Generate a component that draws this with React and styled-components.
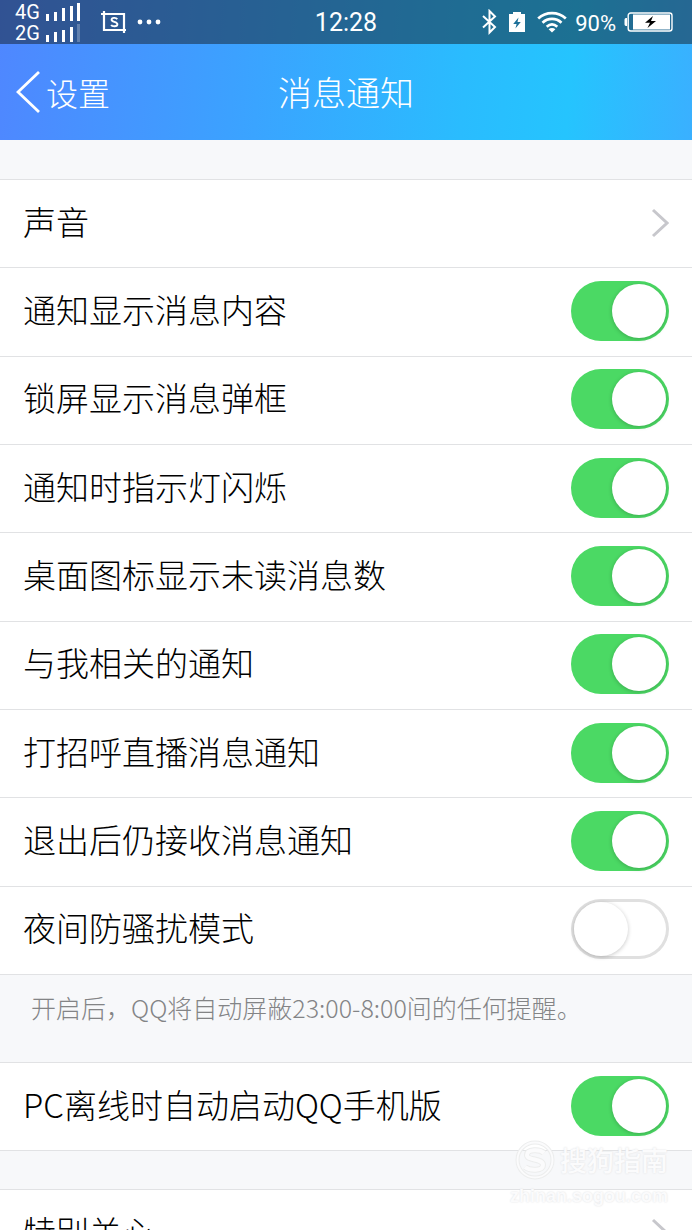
import React, { useState } from "react"
import styled, { createGlobalStyle } from "styled-components"

const alerts = [
  { id: "content", label: "通知显示消息内容", on: true },
  { id: "lock", label: "锁屏显示消息弹框", on: true },
  { id: "led", label: "通知时指示灯闪烁", on: true },
  { id: "badge", label: "桌面图标显示未读消息数", on: true },
  { id: "related", label: "与我相关的通知", on: true },
  { id: "live", label: "打招呼直播消息通知", on: true },
  { id: "exit", label: "退出后仍接收消息通知", on: true },
  { id: "night", label: "夜间防骚扰模式", on: false },
]

const Chevron = () => (
  <svg width="18" height="30" viewBox="0 0 18 30" fill="none" aria-hidden="true">
    <path d="M2 2 L16 15 L2 28" stroke="#c7c7cc" strokeWidth="3" />
  </svg>
)

const SwitchRow = ({ id, label, on }) => {
  const [checked, setChecked] = useState(on)
  return (
    <Row as="label" htmlFor={id}>
      <RowText>{label}</RowText>
      <Switch
        id={id}
        type="checkbox"
        checked={checked}
        onChange={e => setChecked(e.target.checked)}
      />
    </Row>
  )
}

const Signals = () => (
  <svg width="35" height="40" viewBox="0 0 35 40" fill="#fff" aria-hidden="true">
    <path d="M0 12h3v7h-3z M8 10h3v9h-3z M16 6h3v13h-3z M24 4h3v15h-3z M31 1h3v18h-3z" />
    <path d="M0 33h3v7h-3z M8 30h3v10h-3z M16 28h3v12h-3z M24 25h3v15h-3z" />
    <path d="M31 22h3v18h-3z" opacity=".25" />
  </svg>
)

const Status = () => (
  <StatusBar>
    <Side>
      <Networks>
        <span>4G</span>
        <span>2G</span>
      </Networks>
      <Signals />
      <Capture width="26" height="24" viewBox="0 0 26 24" fill="none" aria-hidden="true">
        <path d="M0 4h23v19 M3 1v19h22" stroke="#fff" strokeWidth="2.2" />
        <path
          d="M16.2 9.2 C15.2 7.4 10.6 7.4 10.6 9.8 C10.6 12.4 16.4 11.4 16.4 14.3 C16.4 17 11 16.8 10.2 14.8"
          stroke="#fff"
          strokeWidth="1.9"
        />
      </Capture>
      <svg width="24" height="6" viewBox="0 0 24 6" fill="#fff" aria-hidden="true">
        <circle cx="3" cy="3" r="2.4" />
        <circle cx="12" cy="3" r="2.4" />
        <circle cx="21" cy="3" r="2.4" />
      </svg>
    </Side>
    <Clock>12:28</Clock>
    <Side $end>
      <svg width="15" height="26" viewBox="0 0 15 26" fill="none" aria-hidden="true">
        <path
          d="M1 7 L13 18 L7.5 23.5 V2 L13 7.5 L1 18.5"
          stroke="#fff"
          strokeWidth="2"
        />
      </svg>
      <svg width="16" height="22" viewBox="0 0 16 22" aria-hidden="true">
        <path d="M4 1h8v2h4v18H0V3h4z" fill="#fff" />
        <path d="M9.5 6.5 L4.2 13 H7.6 L6.4 17.5 L11.8 11 H8.5z" fill="#1d7099" />
      </svg>
      <svg width="30" height="22" viewBox="0 0 30 22" fill="none" aria-hidden="true">
        <g stroke="#fff" strokeWidth="2.7">
          <path d="M1.2 7.5 C9 .2 21 .2 28.8 7.5" />
          <path d="M5.5 11.7 C11 6.6 19 6.6 24.5 11.7" />
          <path d="M9.7 15.7 C13 12.8 17 12.8 20.3 15.7" />
        </g>
        <path d="M15 21.5 L11.6 18.3 C13.5 16.7 16.5 16.7 18.4 18.3z" fill="#fff" />
      </svg>
      <Percent>90%</Percent>
      <svg width="49" height="20" viewBox="0 0 49 20" aria-hidden="true">
        <path d="M3 6 C1 6 .5 6.6 .5 8 V12 C.5 13.4 1 14 3 14z" fill="#fff" />
        <rect x="4.2" y="1" width="43.8" height="18" rx="2.5" fill="none" stroke="#fff" strokeWidth="1.4" />
        <rect x="9" y="2.5" width="37" height="15" fill="#fff" />
        <path d="M29 4 L21 10.8 H26 L23.5 16 L32 9 H27z" fill="#000" />
      </svg>
    </Side>
  </StatusBar>
)

export default () => {
  return (
    <Screen>
      <GlobalStyle />
      <Header>
        <Status />
        <NavBar>
          <Back type="button">
            <svg width="25" height="44" viewBox="0 0 25 44" fill="none" aria-hidden="true">
              <path d="M23 2 L2 22 L23 42" stroke="#fff" strokeWidth="2.8" />
            </svg>
            设置
          </Back>
          <Title>消息通知</Title>
        </NavBar>
      </Header>
      <Content>
        <AlertGroup>
          <Row href="#sound">
            <RowText>声音</RowText>
            <Chevron />
          </Row>
          {alerts.map(item => (
            <SwitchRow key={item.id} {...item} />
          ))}
        </AlertGroup>
        <Note>开启后，QQ将自动屏蔽23:00-8:00间的任何提醒。</Note>
        <Group>
          <SwitchRow id="pc" label="PC离线时自动启动QQ手机版" on />
        </Group>
        <Spacer />
        <Group>
          <Row href="#care">
            <RowText>特别关心</RowText>
            <Chevron />
          </Row>
        </Group>
      </Content>
      <Watermark>
        <Brand>
          <svg width="40" height="40" viewBox="0 0 40 40" fill="none" aria-hidden="true">
            <circle cx="20" cy="20" r="17.5" stroke="#eceded" strokeWidth="4" />
            <circle cx="20" cy="20" r="17.5" stroke="#fbfbfc" strokeWidth="2" />
            <path
              d="M29 13 C25 9 12 9 12 15 C12 21 28 18 28 25 C28 31 15 31 10 27"
              stroke="#eceded"
              strokeWidth="6"
            />
            <path
              d="M29 13 C25 9 12 9 12 15 C12 21 28 18 28 25 C28 31 15 31 10 27"
              stroke="#fbfbfc"
              strokeWidth="4"
            />
          </svg>
          搜狗指南
        </Brand>
        <Site>zhinan.sogou.com</Site>
      </Watermark>
    </Screen>
  )
}

const GlobalStyle = createGlobalStyle`
  * {
    box-sizing: border-box;
  }
  body {
    margin: 0;
    background: #f7f8fa;
    font-family: "Noto Sans CJK SC", sans-serif;
    font-weight: 300;
  }
`

const Screen = styled.div`
  position: relative;
  display: flex;
  flex-direction: column;
  height: 100vh;
  overflow: hidden;
`

const Header = styled.header`
  flex: none;
  color: #fff;
  background: linear-gradient(
    95deg,
    #4f87ff 0%,
    #3ca1ff 34%,
    #2abcfe 67%,
    #25c4fe 82%,
    #3ab0ff 100%
  );
`

const StatusBar = styled.div`
  display: grid;
  grid-template-columns: 1fr auto 1fr;
  align-items: center;
  height: 44px;
  padding: 0 19px 0 15px;
  background: rgba(20, 30, 40, 0.5);
  font-family: Roboto, sans-serif;
  font-weight: 400;
`

const Side = styled.div`
  display: flex;
  align-items: center;
  justify-content: ${props => (props.$end ? "flex-end" : "flex-start")};
  gap: ${props => (props.$end ? "12px" : "6px")};
`

const Networks = styled.div`
  display: flex;
  flex-direction: column;
  width: 25px;
  padding-top: 2px;
  font-size: 20px;
  line-height: 21px;
`

const Capture = styled.svg`
  margin: 0 4px 0 14px;
`

const Clock = styled.time`
  padding: 2px 0 0 4px;
  font-size: 25px;
  line-height: 42px;
`

const Percent = styled.span`
  margin: 0 -4px;
  padding-top: 2px;
  font-size: 22px;
`

const NavBar = styled.nav`
  display: grid;
  grid-template-columns: 1fr auto 1fr;
  align-items: center;
  height: 96px;
  padding: 0 16px;
`

const Back = styled.button`
  display: flex;
  align-items: center;
  justify-self: start;
  gap: 5px;
  padding: 0;
  border: 0;
  background: none;
  color: inherit;
  font: inherit;
  font-size: 32px;
  line-height: 44px;
  cursor: pointer;
`

const Title = styled.h1`
  margin: 0;
  font-size: 34px;
  font-weight: 300;
  line-height: 44px;
`

const Content = styled.main`
  flex: 1;
  min-height: 0;
  padding-top: 39px;
  overflow: hidden;
`

const Group = styled.section`
  display: grid;
  grid-auto-rows: 1fr;
  border-bottom: 1px solid #e1e2e4;
  background: #fff;
`

const AlertGroup = styled(Group)`
  min-height: 796px;
`

const Row = styled.a`
  display: flex;
  align-items: center;
  justify-content: space-between;
  min-height: 88px;
  padding: 0 23px 2px;
  border-top: 1px solid #e1e2e4;
  color: #000;
  font-size: 33px;
  line-height: 44px;
  text-decoration: none;
  cursor: pointer;
`

const RowText = styled.span`
  padding-bottom: 4px;
`

const Switch = styled.input`
  flex: none;
  display: flex;
  align-items: center;
  width: 98px;
  height: 60px;
  margin: 0;
  padding: 0 3px;
  border-radius: 30px;
  appearance: none;
  background: #fff;
  box-shadow: inset 0 0 0 3px #e0e0e0;
  cursor: pointer;

  &::before {
    content: "";
    width: 54px;
    height: 54px;
    border-radius: 50%;
    background: #fff;
    box-shadow: 0 1px 4px rgba(0, 0, 0, 0.22);
  }

  &:checked {
    justify-content: flex-end;
    background: #4bd964;
    box-shadow: none;
  }
`

const Note = styled.p`
  min-height: 87px;
  margin: 0;
  padding: 14px 31px;
  color: #838486;
  font-size: 25px;
  line-height: 36px;
`

const Spacer = styled.div`
  height: 38px;
`

const Watermark = styled.div`
  position: absolute;
  right: 24px;
  bottom: 22px;
  display: flex;
  flex-direction: column;
  align-items: flex-end;
  color: #fbfbfc;
  font-weight: 500;
  text-shadow: 0 0 2px #dcdddf;
  pointer-events: none;
`

const Brand = styled.div`
  display: flex;
  align-items: center;
  gap: 5px;
  font-size: 27px;
  line-height: 40px;
`

const Site = styled.div`
  padding-top: 4px;
  font-family: "Liberation Sans", sans-serif;
  font-size: 18px;
  font-weight: 700;
  line-height: 24px;
`
